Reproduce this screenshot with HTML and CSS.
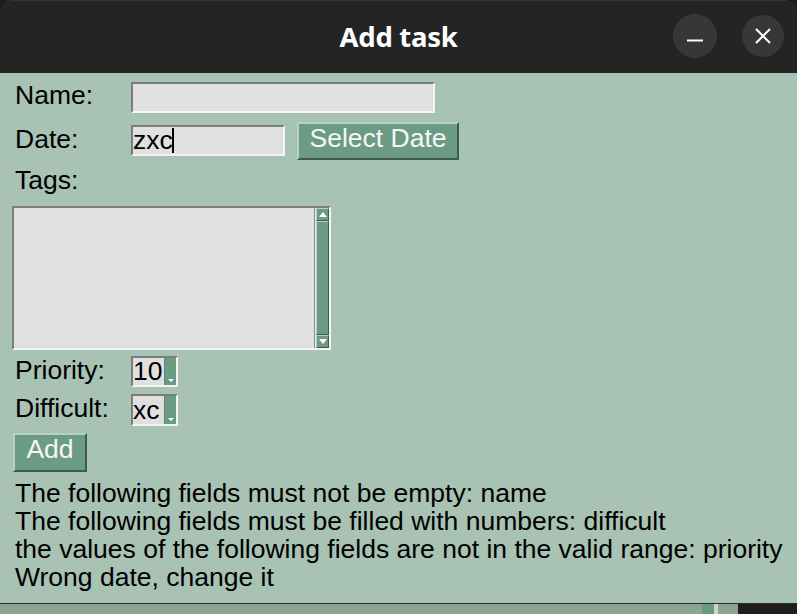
FILE: index.html
```html
<!DOCTYPE html>
<html>
<head>
<meta charset="utf-8">
<link rel="stylesheet" href="styles.css">
</head>
<body>
<div class="desktop">
  <div class="window">
    <div class="titlebar">
      <div class="title">Add task</div>
      <div class="controls">
        <div class="wbtn"><svg width="16" height="16" viewBox="0 0 16 16"><path d="M0 12.5H16" stroke="#fff" stroke-width="2"/></svg></div>
        <div class="wbtn close"><svg width="16" height="16" viewBox="0 0 16 16"><path d="M1 1L15 15M15 1L1 15" stroke="#fff" stroke-width="2"/></svg></div>
      </div>
    </div>
    <div class="content">
      <div class="row row-name">
        <div class="label">Name:</div>
        <div class="entry entry-name"></div>
      </div>
      <div class="row row-date">
        <div class="label">Date:</div>
        <div class="entry entry-date"><span class="val">zxc</span><span class="caret"></span></div>
        <div class="btn btn-date">Select Date</div>
      </div>
      <div class="row row-tags">
        <div class="label">Tags:</div>
      </div>
      <div class="listbox">
        <div class="listarea"></div>
        <div class="scrollbar">
          <div class="sarrow up"><svg width="8" height="5" viewBox="0 0 8 5"><path d="M4 0L8 5H0Z" fill="#fff"/></svg></div>
          <div class="slider"></div>
          <div class="sarrow down"><svg width="8" height="5" viewBox="0 0 8 5"><path d="M0 0H8L4 5Z" fill="#fff"/></svg></div>
        </div>
      </div>
      <div class="row row-prio">
        <div class="label">Priority:</div>
        <div class="spin"><span class="val">10</span><div class="spinbtn"><svg width="6" height="3" viewBox="0 0 6 3"><path d="M0 0H6L3 3Z" fill="#fff"/></svg></div></div>
      </div>
      <div class="row row-diff">
        <div class="label">Difficult:</div>
        <div class="spin"><span class="val">xc</span><div class="spinbtn"><svg width="6" height="3" viewBox="0 0 6 3"><path d="M0 0H6L3 3Z" fill="#fff"/></svg></div></div>
      </div>
      <div class="btn btn-add">Add</div>
      <div class="errors">
        <div>The following fields must not be empty: name</div>
        <div>The following fields must be filled with numbers: difficult</div>
        <div>the values of the following fields are not in the valid range: priority</div>
        <div>Wrong date, change it</div>
      </div>
    </div>
  </div>
  <div class="under">
    <div class="u-gray"></div>
    <div class="u-green"></div>
    <div class="u-line"></div>
    <div class="u-gray2"></div>
    <div class="u-dark"></div>
  </div>
</div>
</body>
</html>
```

FILE: styles.css
```css
html, body {
  margin: 0;
  padding: 0;
  background: #1c1c1c;
}
.desktop {
  width: 797px;
  height: 614px;
  overflow: hidden;
  display: flex;
  flex-direction: column;
}
.window {
  width: 797px;
  height: 603px;
  border-radius: 12px 12px 0 0;
  overflow: hidden;
  display: flex;
  flex-direction: column;
}
.titlebar {
  height: 73px;
  flex: none;
  background: #242424;
  border-radius: 12px 12px 0 0;
  border-top: 1px solid #363636;
  box-sizing: border-box;
  position: relative;
  display: flex;
  align-items: center;
  justify-content: center;
}
.title {
  font-family: "Noto Sans", sans-serif;
  font-weight: 700;
  font-size: 27.5px;
  color: #ffffff;
  margin-top: -1px;
  letter-spacing: -0.3px;
}
.controls {
  position: absolute;
  right: 13px;
  top: 13px;
  display: flex;
  gap: 25px;
}
.wbtn {
  width: 44px;
  height: 44px;
  border-radius: 50%;
  background: #373737;
  display: flex;
  align-items: center;
  justify-content: center;
}
.wbtn.close {
  width: 42px;
  height: 42px;
  margin-top: 1px;
}
.content {
  flex: 1;
  background: #a8c2b4;
  padding-left: 12px;
  font-family: "Liberation Sans", Arial, sans-serif;
  font-size: 26.5px;
  color: #000;
  display: flex;
  flex-direction: column;
  align-items: flex-start;
}
.row {
  display: flex;
  align-items: center;
}
.label {
  width: 116px;
  padding-left: 3px;
  line-height: 28px;
}
.entry, .spin {
  box-sizing: border-box;
  background: #dfe0df;
  border-top: 2px solid #7c7c7c;
  border-left: 2px solid #7c7c7c;
  border-bottom: 2px solid #f4f4f4;
  border-right: 2px solid #f4f4f4;
  display: flex;
  align-items: center;
}
.row-name { margin-top: 9px; height: 31px; }
.row-name .label { margin-top: -5px; }
.entry-name { width: 304px; height: 31px; }
.row-date { margin-top: 9px; height: 38px; }
.row-date .label { margin-top: -4px; }
.entry-date { width: 154px; height: 31px; padding-left: 0; margin-top: -2px; }
.val { line-height: 27px; }
.caret {
  width: 2px;
  height: 25px;
  background: #000;
  margin-left: -1px;
}
.btn {
  box-sizing: border-box;
  background: #6b9c83;
  color: #f6f6f6;
  border-top: 2px solid #b5d2c2;
  border-left: 2px solid #b5d2c2;
  border-bottom: 2px solid #3e5b4c;
  border-right: 2px solid #3e5b4c;
  display: flex;
  align-items: center;
  justify-content: center;
}
.btn-date {
  width: 162px;
  height: 38px;
  margin-left: 12px;
  padding-bottom: 5px;
}
.row-tags { margin-top: 6px; height: 30px; }
.row-tags .label { margin-top: -2px; }
.listbox {
  margin-top: 10px;
  width: 319px;
  height: 144px;
  box-sizing: border-box;
  border-top: 2px solid #7c7c7c;
  border-left: 2px solid #7c7c7c;
  border-bottom: 2px solid #f4f4f4;
  border-right: 2px solid #f4f4f4;
  display: flex;
}
.listarea {
  flex: 1;
  background: #dfe0df;
  border-right: 1px solid #8a8a8a;
}
.scrollbar {
  width: 13px;
  background: #6b9c83;
  border-left: 1px solid #e8eee9;
  display: flex;
  flex-direction: column;
}
.sarrow {
  height: 13px;
  box-sizing: border-box;
  border-top: 1px solid #b5d2c2;
  border-left: 1px solid #b5d2c2;
  border-bottom: 1px solid #3e5b4c;
  border-right: 1px solid #3e5b4c;
  display: flex;
  align-items: center;
  justify-content: center;
}
.slider {
  flex: 1;
  box-sizing: border-box;
  border-top: 1px solid #b5d2c2;
  border-left: 1px solid #b5d2c2;
  border-bottom: 1px solid #3e5b4c;
  border-right: 1px solid #3e5b4c;
}
.row-prio { margin-top: 6px; height: 31px; }
.row-prio .label { margin-top: -4px; }
.row-diff { margin-top: 7px; height: 32px; }
.row-diff .label { margin-top: -4px; }
.spin {
  width: 47px;
  height: 100%;
  padding-left: 0;
  justify-content: space-between;
  align-items: stretch;
}
.spin .val { align-self: center; }
.spinbtn {
  width: 11px;
  background: #6b9c83;
  border-left: 1px solid #5a8a71;
  display: flex;
  align-items: flex-end;
  justify-content: center;
  padding-bottom: 3px;
}
.btn-add {
  margin-top: 7px;
  margin-left: 1px;
  width: 74px;
  height: 39px;
  padding-bottom: 6px;
}
.errors {
  margin-top: 7px;
  padding-left: 3px;
  line-height: 28px;
}
.under {
  flex: 1;
  display: flex;
  border-top: 1px solid #2a2a2a;
}
.u-gray { width: 702px; background: #8da394; }
.u-green { width: 12px; background: #6a9a80; }
.u-line { width: 4px; background: #c9d6ce; }
.u-gray2 { width: 20px; background: #8da394; }
.u-dark { flex: 1; background: #1e1e1e; }
```
